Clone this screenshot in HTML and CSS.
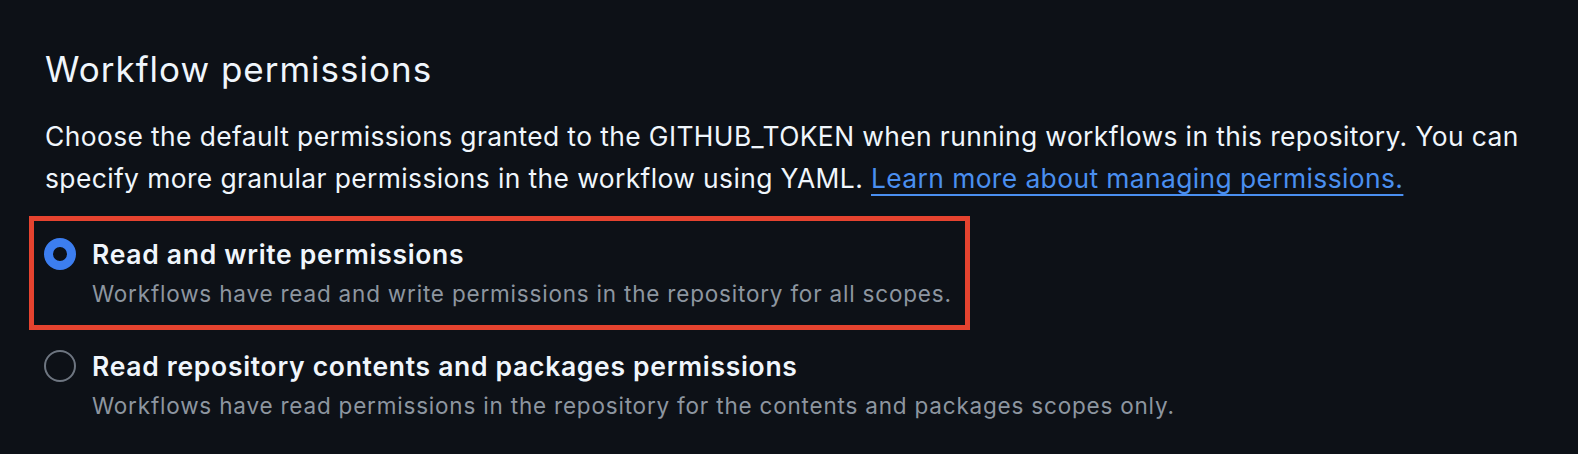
FILE: index.html
```html
<!DOCTYPE html>
<html lang="en">
<head>
<meta charset="utf-8">
<title>Workflow permissions</title>
<link rel="stylesheet" href="styles.css">
</head>
<body>
<main class="section">
  <h2 class="title">Workflow permissions</h2>
  <p class="intro">Choose the default permissions granted to the GITHUB_TOKEN when running workflows in this repository. You can specify more granular permissions in the workflow using YAML. <a class="link" href="#">Learn more about managing permissions.</a></p>
  <div class="options">
    <label class="option option-highlight">
      <span class="radio radio-checked"></span>
      <span class="option-text">
        <span class="option-label">Read and write permissions</span>
        <span class="option-note">Workflows have read and write permissions in the repository for all scopes.</span>
      </span>
    </label>
    <label class="option">
      <span class="radio"></span>
      <span class="option-text">
        <span class="option-label">Read repository contents and packages permissions</span>
        <span class="option-note">Workflows have read permissions in the repository for the contents and packages scopes only.</span>
      </span>
    </label>
  </div>
</main>
</body>
</html>
```

FILE: styles.css
```css
* { box-sizing: border-box; }

html, body {
  margin: 0;
  padding: 0;
  background: #0d1117;
}

body {
  font-family: Inter, "Noto Sans", "Liberation Sans", sans-serif;
  color: #f0f6fc;
  width: 1578px;
  height: 454px;
  overflow: hidden;
}

.section {
  padding: 46px 0 0 45px;
}

.title {
  margin: 0;
  font-size: 35px;
  font-weight: 400;
  line-height: 46px;
  letter-spacing: 1px;
  color: #f0f6fc;
}

.intro {
  margin: 23px 0 0 0;
  width: 1500px;
  font-size: 26.4px;
  line-height: 42px;
  letter-spacing: 0.4px;
  color: #f0f6fc;
}

.link {
  color: #4a8ff0;
  text-decoration: underline;
  text-underline-offset: 6px;
  text-decoration-thickness: 2px;
}

.options {
  display: flex;
  flex-direction: column;
  align-items: flex-start;
  margin: 17px 0 0 -16px;
}

.option {
  display: flex;
  align-items: flex-start;
  gap: 16px;
  padding: 14px 13px 15px 10px;
  border: 5px solid transparent;
}

.option + .option {
  margin-top: -2px;
}

.option-highlight {
  border-color: #e5432f;
}

.radio {
  flex: none;
  width: 32px;
  height: 32px;
  margin-top: 3px;
  border-radius: 50%;
  border: 2px solid #6e7681;
}

.radio-checked {
  border: 9px solid #3c7ef0;
  background: #0d1117;
}

.option-text {
  display: flex;
  flex-direction: column;
}

.option-label {
  font-size: 26.5px;
  font-weight: 600;
  line-height: 38px;
  letter-spacing: 0.7px;
  color: #f0f6fc;
}

.option-note {
  margin-top: 5px;
  font-size: 22.5px;
  line-height: 32px;
  letter-spacing: 0.8px;
  color: #8d96a0;
}
```
